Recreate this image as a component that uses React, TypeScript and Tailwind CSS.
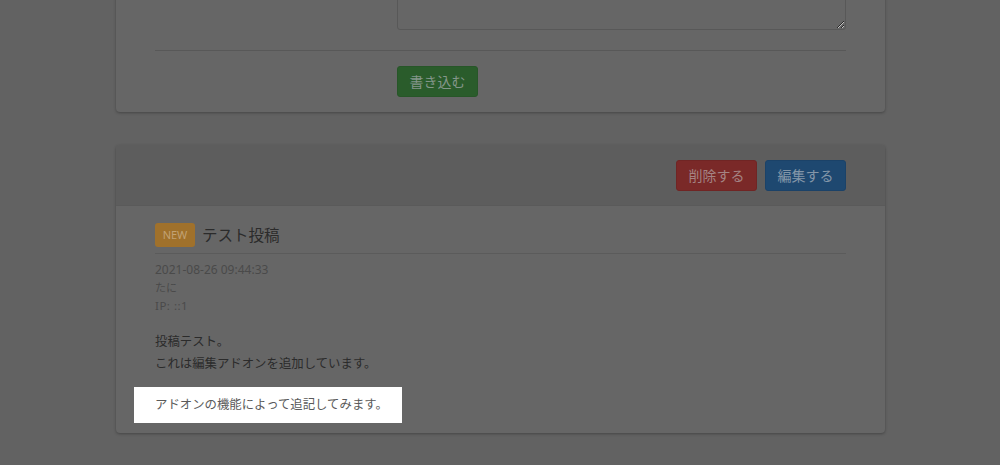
import React from "react";

const font = { fontFamily: '"Noto Sans", "Noto Sans CJK JP", sans-serif' };

export default function App() {
  return (
    <div
      className="w-[1000px] h-[465px] overflow-hidden bg-[#626262] font-['Noto_Sans','Noto_Sans_CJK_JP',sans-serif]"
      style={font}
    >
      <div className="ml-[116px] w-[769px] -mt-[85px]">
        {/* Top card: form */}
        <div className="bg-[#666666] rounded-[4px] shadow-[0_1px_3px_rgba(0,0,0,0.3)] px-[39px] pt-[15px] pb-[15px]">
          <div className="flex">
            <div className="w-[242px]" />
            <textarea
              readOnly
              className="block w-[450px] h-[100px] bg-[#666666] border border-[#585858] rounded-[3px] resize-y outline-none"
            />
          </div>
          <div className="mt-[20px] border-t border-[#585858]" />
          <div className="flex mt-[15px]">
            <div className="w-[242px]" />
            <button className="w-[81px] h-[31px] rounded-[3px] bg-[#2a5c2b] border border-[#275628] text-[14px] text-[#84968a] flex items-center justify-center">
              書き込む
            </button>
          </div>
        </div>

        {/* Second card: post */}
        <div className="mt-[33px] bg-[#666666] rounded-[4px] shadow-[0_1px_3px_rgba(0,0,0,0.3)] overflow-hidden">
          <div className="h-[61px] bg-[#5d5d5d] border-b border-[#5a5a5a] flex items-center justify-end gap-[8px] px-[39px]">
            <button className="w-[81px] h-[31px] rounded-[3px] bg-[#7a2928] border border-[#702524] text-[14px] text-[#a48383] flex items-center justify-center">
              削除する
            </button>
            <button className="w-[81px] h-[31px] rounded-[3px] bg-[#1e4870] border border-[#1b4268] text-[14px] text-[#8396a8] flex items-center justify-center">
              編集する
            </button>
          </div>
          <div className="px-[39px] pt-[17px] pb-[10px]">
            <div className="flex items-center h-[24px]">
              <span className="w-[40px] h-[24px] rounded-[3px] bg-[#a0712b] text-[11px] text-[#c2a274] flex items-center justify-center">
                NEW
              </span>
              <span className="ml-[7px] text-[15.5px] leading-[24px] text-[#2b2b2b]">
                テスト投稿
              </span>
            </div>
            <div className="mt-[6px] border-t border-[#5b5b5b]" />
            <div className="mt-[7px] text-[12px] leading-[18px] text-[#4a4a4a]">
              2021-08-26 09:44:33
            </div>
            <div className="text-[11px] leading-[18px] text-[#4a4a4a]">たに</div>
            <div className="text-[11.5px] leading-[18px] tracking-[0.5px] text-[#4a4a4a]">IP: ::1</div>
            <div className="mt-[16px] text-[12.4px] leading-[22px] text-[#2b2b2b]">
              <div>投稿テスト。</div>
              <div>これは編集アドオンを追加しています。</div>
            </div>
            <div className="mt-[12px] -ml-[21px] w-[268px] h-[36px] bg-white pl-[21px] flex items-center text-[12.4px] text-[#5a5a5a]">
              アドオンの機能によって追記してみます。
            </div>
          </div>
        </div>
      </div>
    </div>
  );
}
